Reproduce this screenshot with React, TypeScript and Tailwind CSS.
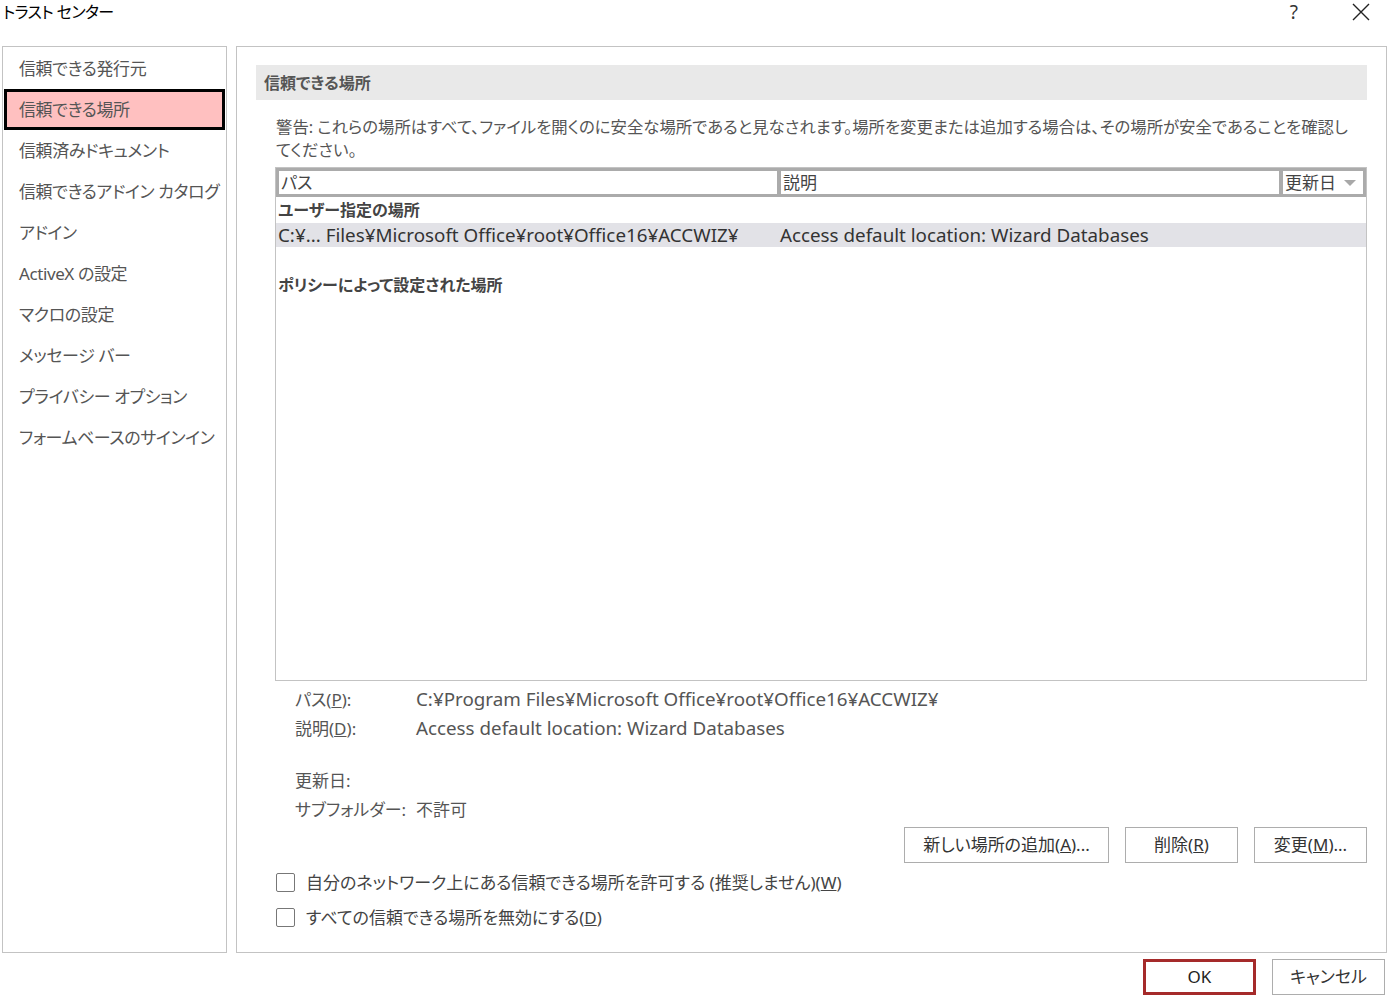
import { useState } from "react";

const navItems = [
  "信頼できる発行元",
  "信頼できる場所",
  "信頼済みドキュメント",
  "信頼できるアドイン カタログ",
  "アドイン",
  "ActiveX の設定",
  "マクロの設定",
  "メッセージ バー",
  "プライバシー オプション",
  "フォームベースのサインイン",
];

function Btn({ children, className = "" }: { children: React.ReactNode; className?: string }) {
  return (
    <button
      className={`h-[36px] border border-[#adadad] bg-white text-[17px] text-[#333] flex items-center justify-center whitespace-nowrap ${className}`}
    >
      {children}
    </button>
  );
}

function Check({ label }: { label: React.ReactNode }) {
  const [checked, setChecked] = useState(false);
  return (
    <label className="flex items-center h-[35px] cursor-default" onClick={() => setChecked(!checked)}>
      <span className="w-[19px] h-[19px] border-[1.5px] border-[#777] rounded-[2px] bg-white flex items-center justify-center">
        {checked && <span className="w-[9px] h-[9px] bg-[#333]" />}
      </span>
      <span className="ml-[11px] text-[17px] text-[#444] whitespace-nowrap">{label}</span>
    </label>
  );
}

export default function App() {
  const [selected, setSelected] = useState(1);

  return (
    <div className="w-[1389px] h-[1000px] bg-white text-[#444] overflow-hidden font-['Noto_Sans','Noto_Sans_CJK_JP',sans-serif] [font-feature-settings:'palt']">
      {/* Title bar */}
      <div className="h-[46px] flex items-start">
        <div className="ml-[3px] mt-[1px] text-[16px] tracking-[-0.6px] text-black leading-[22px]">トラスト センター</div>
        <div className="ml-auto flex items-start">
          <span className="text-[19px] text-[#333] leading-[24px] mr-[54px]">?</span>
          <svg width="18" height="18" viewBox="0 0 18 18" className="mt-[3px] mr-[19px]">
            <path d="M1 1 L17 17 M17 1 L1 17" stroke="#222" strokeWidth="1.4" />
          </svg>
        </div>
      </div>

      <div className="flex h-[907px]">
        {/* Left nav */}
        <div className="ml-[2px] w-[225px] border border-[#c3c3c3] p-[1px]">
          {navItems.map((n, i) => (
            <div
              key={n}
              onClick={() => setSelected(i)}
              className={`h-[41px] flex items-center text-[17px] tracking-[-0.4px] text-[#555] whitespace-nowrap cursor-default ${
                selected === i ? "bg-[#ffc0c0] border-[3px] border-black pl-[12px]" : "pl-[15px]"
              }`}
            >
              {n}
            </div>
          ))}
        </div>

        {/* Right panel */}
        <div className="ml-[9px] w-[1151px] border border-[#c3c3c3] pt-[18px] pl-[19px] pr-[19px] flex flex-col">
          <div className="h-[35px] bg-[#e9e9e9] flex items-center pl-[8px] text-[16px] font-bold text-[#555]">
            信頼できる場所
          </div>

          <div className="pl-[20px] mt-[15px] text-[16.4px] leading-[23px] text-[#555]">
            <div className="whitespace-nowrap">
              警告: これらの場所はすべて、ファイルを開くのに安全な場所であると見なされます。場所を変更または追加する場合は、その場所が安全であることを確認し
            </div>
            <div>てください。</div>
          </div>

          {/* List view */}
          <div className="ml-[19px] mt-[6px] h-[514px] border border-[#c3c3c3] flex flex-col">
            <div className="h-[29px] bg-[#ababab] flex gap-[4px] p-[3px]">
              <div className="w-[498px] bg-white flex items-center pl-[2px] text-[17px] text-[#444]">パス</div>
              <div className="w-[498px] bg-white flex items-center pl-[2px] text-[17px] text-[#444]">説明</div>
              <div className="flex-1 bg-white flex items-center pl-[2px] text-[17px] text-[#444]">
                更新日
                <svg width="12" height="8" viewBox="0 0 12 8" className="ml-[8px]">
                  <path d="M0 1 L12 1 L6 7 Z" fill="#a8a8a8" />
                </svg>
              </div>
            </div>
            <div className="h-[26px] flex items-center pl-[2px] text-[16px] font-bold text-[#444]">
              ユーザー指定の場所
            </div>
            <div className="h-[24px] bg-[#e2e2e7] flex items-center text-[18.8px] text-[#333] whitespace-nowrap">
              <div className="w-[502px] pl-[2px]">C:¥... Files¥Microsoft Office¥root¥Office16¥ACCWIZ¥</div>
              <div className="pl-[2px]">Access default location: Wizard Databases</div>
            </div>
            <div className="h-[25px]" />
            <div className="h-[26px] flex items-center pl-[2px] text-[16px] font-bold text-[#444]">
              ポリシーによって設定された場所
            </div>
          </div>

          {/* Details */}
          <div className="ml-[39px] mt-[4px] text-[17px] text-[#555] whitespace-nowrap">
            <div className="h-[29px] flex items-center">
              <span className="w-[121px]">
                パス(<span className="underline">P</span>):
              </span>
              <span className="text-[18.8px]">C:¥Program Files¥Microsoft Office¥root¥Office16¥ACCWIZ¥</span>
            </div>
            <div className="h-[29px] flex items-center">
              <span className="w-[121px]">
                説明(<span className="underline">D</span>):
              </span>
              <span className="text-[18.8px]">Access default location: Wizard Databases</span>
            </div>
            <div className="h-[23px]" />
            <div className="h-[29px] flex items-center">
              <span className="w-[121px]">更新日:</span>
            </div>
            <div className="h-[29px] flex items-center">
              <span className="w-[121px]">サブフォルダー:</span>
              <span>不許可</span>
            </div>
          </div>

          <div className="mt-[3px] flex justify-end gap-[16px]">
            <Btn className="w-[205px]">
              新しい場所の追加(<span className="underline">A</span>)...
            </Btn>
            <Btn className="w-[113px]">
              削除(<span className="underline">R</span>)
            </Btn>
            <Btn className="w-[113px]">
              変更(<span className="underline">M</span>)...
            </Btn>
          </div>

          <div className="ml-[20px] mt-[2px]">
            <Check
              label={
                <>
                  自分のネットワーク上にある信頼できる場所を許可する (推奨しません)(<span className="underline">W</span>)
                </>
              }
            />
            <Check
              label={
                <>
                  すべての信頼できる場所を無効にする(<span className="underline">D</span>)
                </>
              }
            />
          </div>
        </div>
      </div>

      {/* Footer */}
      <div className="mt-[6px] flex justify-end gap-[16px] pr-[4px]">
        <button className="w-[113px] h-[36px] border-[3px] border-[#a52a2a] bg-white text-[17px] text-[#222]">OK</button>
        <Btn className="w-[113px]">キャンセル</Btn>
      </div>
    </div>
  );
}
